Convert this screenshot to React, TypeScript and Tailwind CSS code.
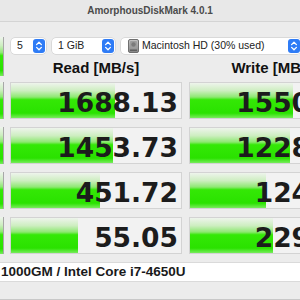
const sans = "font-['Liberation_Sans',Arial,sans-serif]"

const barFill =
  'bg-[linear-gradient(to_bottom,#eef4ec_0%,#cdeec0_22%,#8ee872_40%,#34e806_48%,#2ae200_86%,#78ec5c_100%)]'

const rows = [
  { read: '1688.13', readBar: 104, write: '1550.42', writeBar: 103 },
  { read: '1453.73', readBar: 102, write: '1228.90', writeBar: 100 },
  { read: '451.72', readBar: 89, write: '124.36', writeBar: 76 },
  { read: '55.05', readBar: 67, write: '229.18', writeBar: 83 },
]

function Stepper() {
  return (
    <div className="flex h-[14px] w-[12px] shrink-0 items-center justify-center rounded-[3px] bg-[#2f7cf6]">
      <svg width="12" height="14" viewBox="0 0 12 14" fill="none">
        <path d="M3.6 5.6 6 3.2 8.4 5.6" stroke="white" strokeWidth="1.3" strokeLinecap="round" strokeLinejoin="round" />
        <path d="M3.6 8.4 6 10.8 8.4 8.4" stroke="white" strokeWidth="1.3" strokeLinecap="round" strokeLinejoin="round" />
      </svg>
    </div>
  )
}

function DiskIcon() {
  return (
    <svg width="11" height="14" viewBox="0 0 11 14" className="shrink-0">
      <defs>
        <linearGradient id="hd" x1="0" y1="0" x2="0" y2="1">
          <stop offset="0" stopColor="#c4c4c4" />
          <stop offset="1" stopColor="#858585" />
        </linearGradient>
      </defs>
      <rect x="0.5" y="0.5" width="10" height="13" rx="1.5" fill="url(#hd)" stroke="#6f6f6f" />
      <rect x="2" y="2" width="7" height="7" rx="1" fill="#9d9d9d" />
      <circle cx="5.5" cy="5.5" r="2.2" fill="#7a7a7a" />
      <rect x="2" y="10.5" width="7" height="1.5" fill="#5f5f5f" />
    </svg>
  )
}

function Cell({ value, bar }: { value: string; bar: number }) {
  return (
    <div className="relative h-[37px] w-[172px] shrink-0 border border-[#d3d3d3] bg-[#f2f2f2]">
      <div className={`absolute inset-y-0 left-0 ${barFill}`} style={{ width: bar }} />
      <div className="relative flex h-full items-center justify-end pr-[3px] pt-[5px] font-['DejaVu_Sans',sans-serif] text-[26.5px] font-bold leading-none text-[#1c1c1c]">
        {value}
      </div>
    </div>
  )
}

export default function App() {
  return (
    <div className={`flex h-[300px] w-[300px] flex-col overflow-hidden border-b border-[#c8c8c8] bg-[#ececec] ${sans}`}>
      <div className="flex h-[22px] shrink-0 items-center justify-center border-b border-[#d4d4d4] bg-[#e8e8e8] text-[10px] font-bold text-[#4b4b4b]">
        AmorphousDiskMark 4.0.1
      </div>

      <div className="flex shrink-0">
        <div className="flex w-[4px] shrink-0 flex-col">
          <div className={`mt-[15px] h-[39px] border-r border-[#a8a8a8] ${barFill}`} />
          <div className="mt-[6px] flex flex-col gap-[8px]">
            {rows.map((row) => (
              <div key={row.read} className={`h-[37px] border-r border-[#a8a8a8] ${barFill}`} />
            ))}
          </div>
        </div>

        <div className="ml-[6px] flex flex-col">
          <div className="mt-[16px] flex h-[16px] items-center text-[10.5px] text-[#222]">
            <div className="ml-[1px] flex h-[16px] w-[35px] items-center justify-between rounded-[4px] bg-white pl-[6px] pr-[1px] shadow-[0_0_0_0.5px_#c6c6c6]">
              <span>5</span>
              <Stepper />
            </div>
            <div className="ml-[6px] flex h-[16px] w-[63px] items-center justify-between rounded-[4px] bg-white pl-[6px] pr-[1px] shadow-[0_0_0_0.5px_#c6c6c6]">
              <span>1 GiB</span>
              <Stepper />
            </div>
            <div className="ml-[6px] flex h-[16px] w-[180px] shrink-0 items-center rounded-[4px] bg-white pl-[7px] pr-[1px] shadow-[0_0_0_0.5px_#c6c6c6]">
              <DiskIcon />
              <span className="ml-[3px] flex-1 whitespace-nowrap">Macintosh HD (30% used)</span>
              <Stepper />
            </div>
          </div>

          <div className="flex h-[28px] items-center text-[15px] font-bold text-[#111]">
            <div className="w-[172px] shrink-0 text-center">Read [MB/s]</div>
            <div className="ml-[7px] w-[172px] shrink-0 text-center">Write [MB/s]</div>
          </div>

          <div className="flex flex-col gap-[8px]">
            {rows.map((row) => (
              <div key={row.read} className="flex gap-[7px]">
                <Cell value={row.read} bar={row.readBar} />
                <Cell value={row.write} bar={row.writeBar} />
              </div>
            ))}
          </div>
        </div>
      </div>

      <div className="mt-[8px] flex h-[20px] shrink-0 items-center border-y border-[#dadada] bg-white pl-[1px] text-[13.5px] font-bold whitespace-nowrap text-[#1a1a1a]">
        1000GM / Intel Core i7-4650U
      </div>
    </div>
  )
}
